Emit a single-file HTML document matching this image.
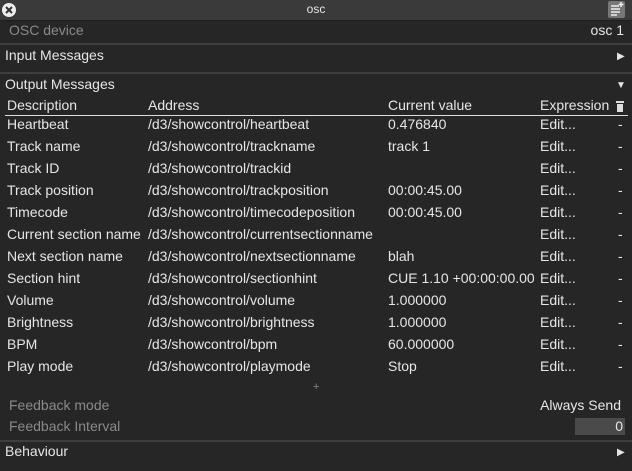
<html><head><style>
body{margin:0;width:632px;height:471px;background:#262626;font-family:"Liberation Sans","DejaVu Sans",sans-serif;font-size:14px;color:#e6e6e6;position:relative;overflow:hidden}
.a{position:absolute;white-space:nowrap;line-height:17px}
.t{position:absolute;left:0;top:0;width:632px;height:20px;background:#3a3a3a}
.sep{position:absolute;left:0;width:632px;height:2px;background:#3e3e3e}
.g{color:#8a8a8a}
</style></head><body>
<div class="t"></div>
<div class="a" style="left:0;top:1px;width:632px;text-align:center;font-size:12px">osc</div>
<svg class="a" style="left:1px;top:2px" width="16" height="16"><circle cx="8" cy="8" r="7" fill="#eee"/><path d="M5 5L11 11M11 5L5 11" stroke="#333" stroke-width="2"/></svg>
<svg class="a" style="left:608px;top:1px" width="17" height="17"><rect x="0" y="0" width="17" height="17" rx="2" fill="#777"/><path d="M3 5h8M3 8h9M3 11h9M3 14h6" stroke="#eee" stroke-width="1.5"/><path d="M13 1v5M10.5 3.5h5" stroke="#eee" stroke-width="1.5"/></svg>
<div class="sep" style="top:20px;height:1px;background:#1e1e1e"></div>
<div class="a g" style="left:9px;top:22px">OSC device</div>
<div class="a" style="right:8px;top:22px">osc 1</div>
<div class="sep" style="top:43px"></div>
<div class="a" style="left:5px;top:47px">Input Messages</div>
<div class="a" style="left:617px;top:48px;font-size:10px">▶</div>
<div class="sep" style="top:72px"></div>
<div class="a" style="left:5px;top:76px">Output Messages</div>
<div class="a" style="left:616px;top:77px;font-size:10px">▼</div>
<div class="a" style="left:7px;top:97px">Description</div>
<div class="a" style="left:148px;top:97px">Address</div>
<div class="a" style="left:388px;top:97px">Current value</div>
<div class="a" style="left:540px;top:97px">Expression</div>
<svg class="a" style="left:615px;top:100px" width="10" height="12"><rect x="1" y="1" width="8" height="2" fill="#ddd"/><rect x="2" y="4" width="6" height="8" fill="#ddd"/></svg>
<div class="sep" style="top:115px;left:5px;width:623px;height:1px;background:#ddd"></div>
<div id="rows"></div>
<script>
var r=[["Heartbeat","heartbeat","0.476840"],["Track name","trackname","track 1"],["Track ID","trackid",""],["Track position","trackposition","00:00:45.00"],["Timecode","timecodeposition","00:00:45.00"],["Current section name","currentsectionname",""],["Next section name","nextsectionname","blah"],["Section hint","sectionhint","CUE 1.10 +00:00:00.00..."],["Volume","volume","1.000000"],["Brightness","brightness","1.000000"],["BPM","bpm","60.000000"],["Play mode","playmode","Stop"]];
var h="";r.forEach(function(x,i){var y=116+i*22;h+='<div class="a" style="left:7px;top:'+y+'px">'+x[0]+'</div><div class="a" style="left:148px;top:'+y+'px">/d3/showcontrol/'+x[1]+'</div><div class="a" style="left:388px;top:'+y+'px;max-width:146px;overflow:hidden">'+x[2]+'</div><div class="a" style="left:540px;top:'+y+'px">Edit...</div><div class="a" style="left:618px;top:'+y+'px">-</div>';});
document.getElementById("rows").innerHTML=h;
</script>
<div class="a g" style="left:313px;top:379px;font-size:11px">+</div>
<div class="a g" style="left:9px;top:397px">Feedback mode</div>
<div class="a" style="right:11px;top:397px">Always Send</div>
<div class="a g" style="left:9px;top:418px">Feedback Interval</div>
<div class="a" style="left:575px;top:418px;width:50px;height:17px;background:#4a4a4a"></div>
<div class="a" style="right:9px;top:418px">0</div>
<div class="sep" style="top:440px"></div>
<div class="a" style="left:5px;top:443px">Behaviour</div>
<div class="a" style="left:617px;top:444px;font-size:10px">▶</div>
</body></html>
